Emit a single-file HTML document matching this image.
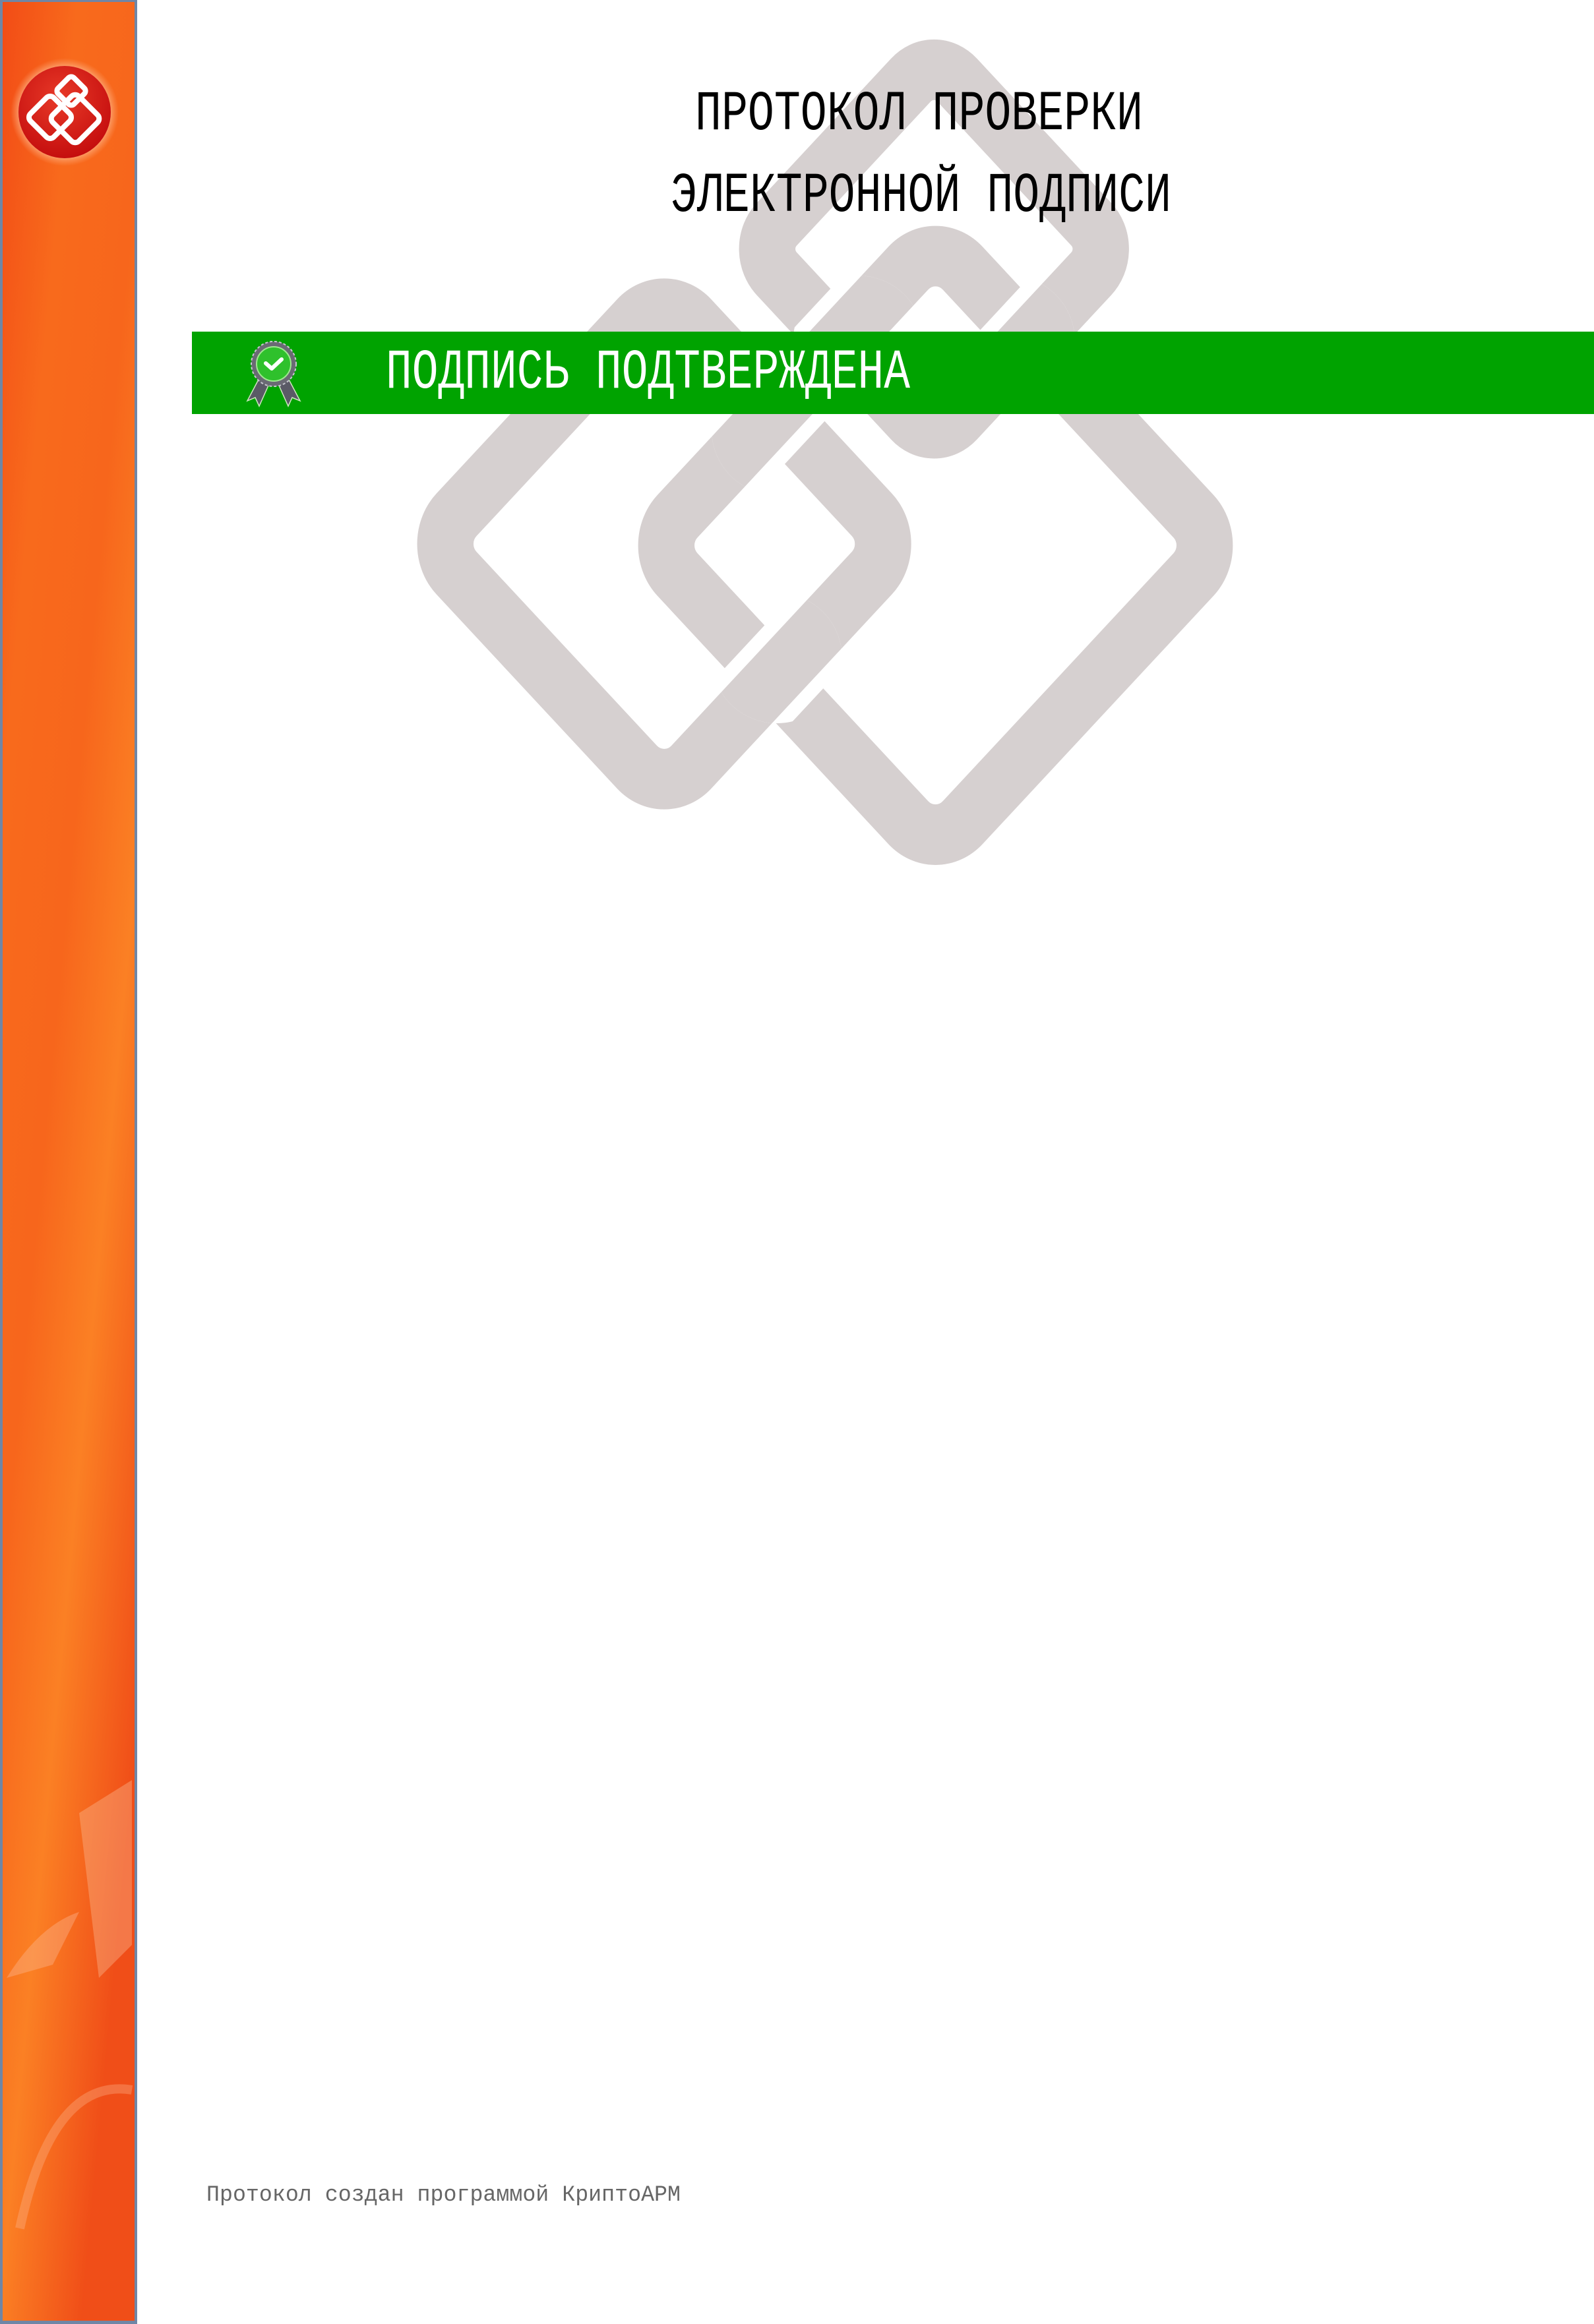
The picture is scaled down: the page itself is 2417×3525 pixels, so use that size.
<!DOCTYPE html>
<html><head><meta charset="utf-8"><style>
html,body{margin:0;padding:0;background:#fff;width:2417px;height:3525px;overflow:hidden}
</style></head><body>
<svg width="2417" height="3525" viewBox="0 0 2417 3525" xmlns="http://www.w3.org/2000/svg" style="position:absolute;left:0;top:0">
<defs>
<linearGradient id="sb" x1="0" y1="0" x2="0.6" y2="1">
<stop offset="0" stop-color="#f24c16"/>
<stop offset="0.25" stop-color="#f86a1c"/>
<stop offset="0.5" stop-color="#f7661c"/>
<stop offset="0.72" stop-color="#fb8024"/>
<stop offset="1" stop-color="#f04e18"/>
</linearGradient>
<radialGradient id="glow" cx="0.5" cy="0.5" r="0.5">
<stop offset="0.75" stop-color="#ffd0b0" stop-opacity="0.9"/>
<stop offset="1" stop-color="#ffb080" stop-opacity="0"/>
</radialGradient>
<radialGradient id="red" cx="0.45" cy="0.35" r="0.65">
<stop offset="0" stop-color="#e83a28"/>
<stop offset="1" stop-color="#c50e0e"/>
</radialGradient>
<rect id="dL" x="-112" y="-112" width="224" height="224" rx="26" transform="translate(448,367) scale(1,1.075) rotate(45)"/>
<rect id="dU" x="-86" y="-86" width="172" height="172" rx="22" transform="translate(630,168) scale(1,1.075) rotate(45)"/>
<rect id="dR" x="-136" y="-136" width="272" height="272" rx="26" transform="translate(631,368) scale(1,1.075) rotate(45)"/>
<clipPath id="c1"><circle cx="524" cy="444" r="44"/></clipPath>
<clipPath id="c2"><circle cx="524" cy="290" r="44"/></clipPath>
<clipPath id="c3"><circle cx="579" cy="230" r="44"/></clipPath>
<clipPath id="c4"><circle cx="681" cy="230" r="44"/></clipPath>
</defs>
<rect x="0" y="0" width="208" height="3525" fill="#6f86a6"/>
<rect x="4" y="3" width="200" height="3517" fill="url(#sb)"/>
<path d="M120 2750 L200 2700 L200 2950 L150 3000 Z" fill="#fbb890" opacity="0.4"/>
<path d="M10 3000 Q60 2920 120 2900 L80 2980 Z" fill="#fbc0a0" opacity="0.35"/>
<path d="M30 3380 Q80 3150 200 3170" stroke="#fbb890" stroke-width="14" fill="none" opacity="0.35"/>
<circle cx="98" cy="170" r="82" fill="url(#glow)"/>
<circle cx="98" cy="170" r="70" fill="url(#red)"/>
<g fill="none" stroke="#fff" stroke-width="8" stroke-linejoin="round">
<rect x="-25" y="-25" width="50" height="50" rx="8" transform="translate(76,178) rotate(45)"/>
<rect x="-17" y="-17" width="34" height="34" rx="6" transform="translate(108,138) rotate(45)"/>
<rect x="-28" y="-28" width="56" height="56" rx="8" transform="translate(114,180) rotate(45)"/>
</g>
<g transform="scale(2.248)" fill="none" stroke-linejoin="round">
<g stroke="#d6d0d0" stroke-width="38">
<use href="#dL"/><use href="#dU"/><use href="#dR"/>
</g>
<g clip-path="url(#c1)"><use href="#dL" stroke="#fff" stroke-width="56"/><use href="#dL" stroke="#d6d0d0" stroke-width="38"/></g>
<g clip-path="url(#c2)"><use href="#dR" stroke="#fff" stroke-width="56"/><use href="#dR" stroke="#d6d0d0" stroke-width="38"/></g>
<g clip-path="url(#c3)"><use href="#dR" stroke="#fff" stroke-width="56"/><use href="#dR" stroke="#d6d0d0" stroke-width="38"/></g>
<g clip-path="url(#c4)"><use href="#dU" stroke="#fff" stroke-width="56"/><use href="#dU" stroke="#d6d0d0" stroke-width="38"/></g>
</g>
<g font-family="Liberation Mono, DejaVu Sans Mono, monospace" font-size="66" fill="#000">
<text transform="translate(1054,196) scale(1,1.3)" textLength="679" lengthAdjust="spacingAndGlyphs">ПРОТОКОЛ ПРОВЕРКИ</text>
<text transform="translate(1017,320) scale(1,1.3)" textLength="759" lengthAdjust="spacingAndGlyphs">ЭЛЕКТРОННОЙ ПОДПИСИ</text>
</g>
<rect x="291" y="503" width="2126" height="125" fill="#00a300"/>
<text transform="translate(585,588) scale(1,1.3)" font-family="Liberation Mono, DejaVu Sans Mono, monospace" font-size="66" fill="#fff" textLength="795" lengthAdjust="spacingAndGlyphs">ПОДПИСЬ ПОДТВЕРЖДЕНА</text>
<g>
<path d="M395 570 L375 608 L387 603 L393 616 L410 578 Z" fill="#5a5a66" stroke="#cfe8c0" stroke-width="1.5"/>
<path d="M435 570 L455 608 L443 603 L437 616 L420 578 Z" fill="#5a5a66" stroke="#cfe8c0" stroke-width="1.5"/>
<circle cx="415" cy="552" r="34" fill="#6a6a74" stroke="#c8c8d0" stroke-width="2" stroke-dasharray="4 3"/>
<circle cx="415" cy="552" r="26" fill="#2fc12c" stroke="#9fe890" stroke-width="2"/>
<path d="M403 551 L412 559 L427 545" fill="none" stroke="#fff" stroke-width="6" stroke-linecap="round" stroke-linejoin="round"/>
</g>
<text x="313" y="3338" font-family="Liberation Mono, DejaVu Sans Mono, monospace" font-size="34" fill="#666" textLength="719" lengthAdjust="spacingAndGlyphs">Протокол создан программой КриптоАРМ</text>
</svg>
</body></html>
